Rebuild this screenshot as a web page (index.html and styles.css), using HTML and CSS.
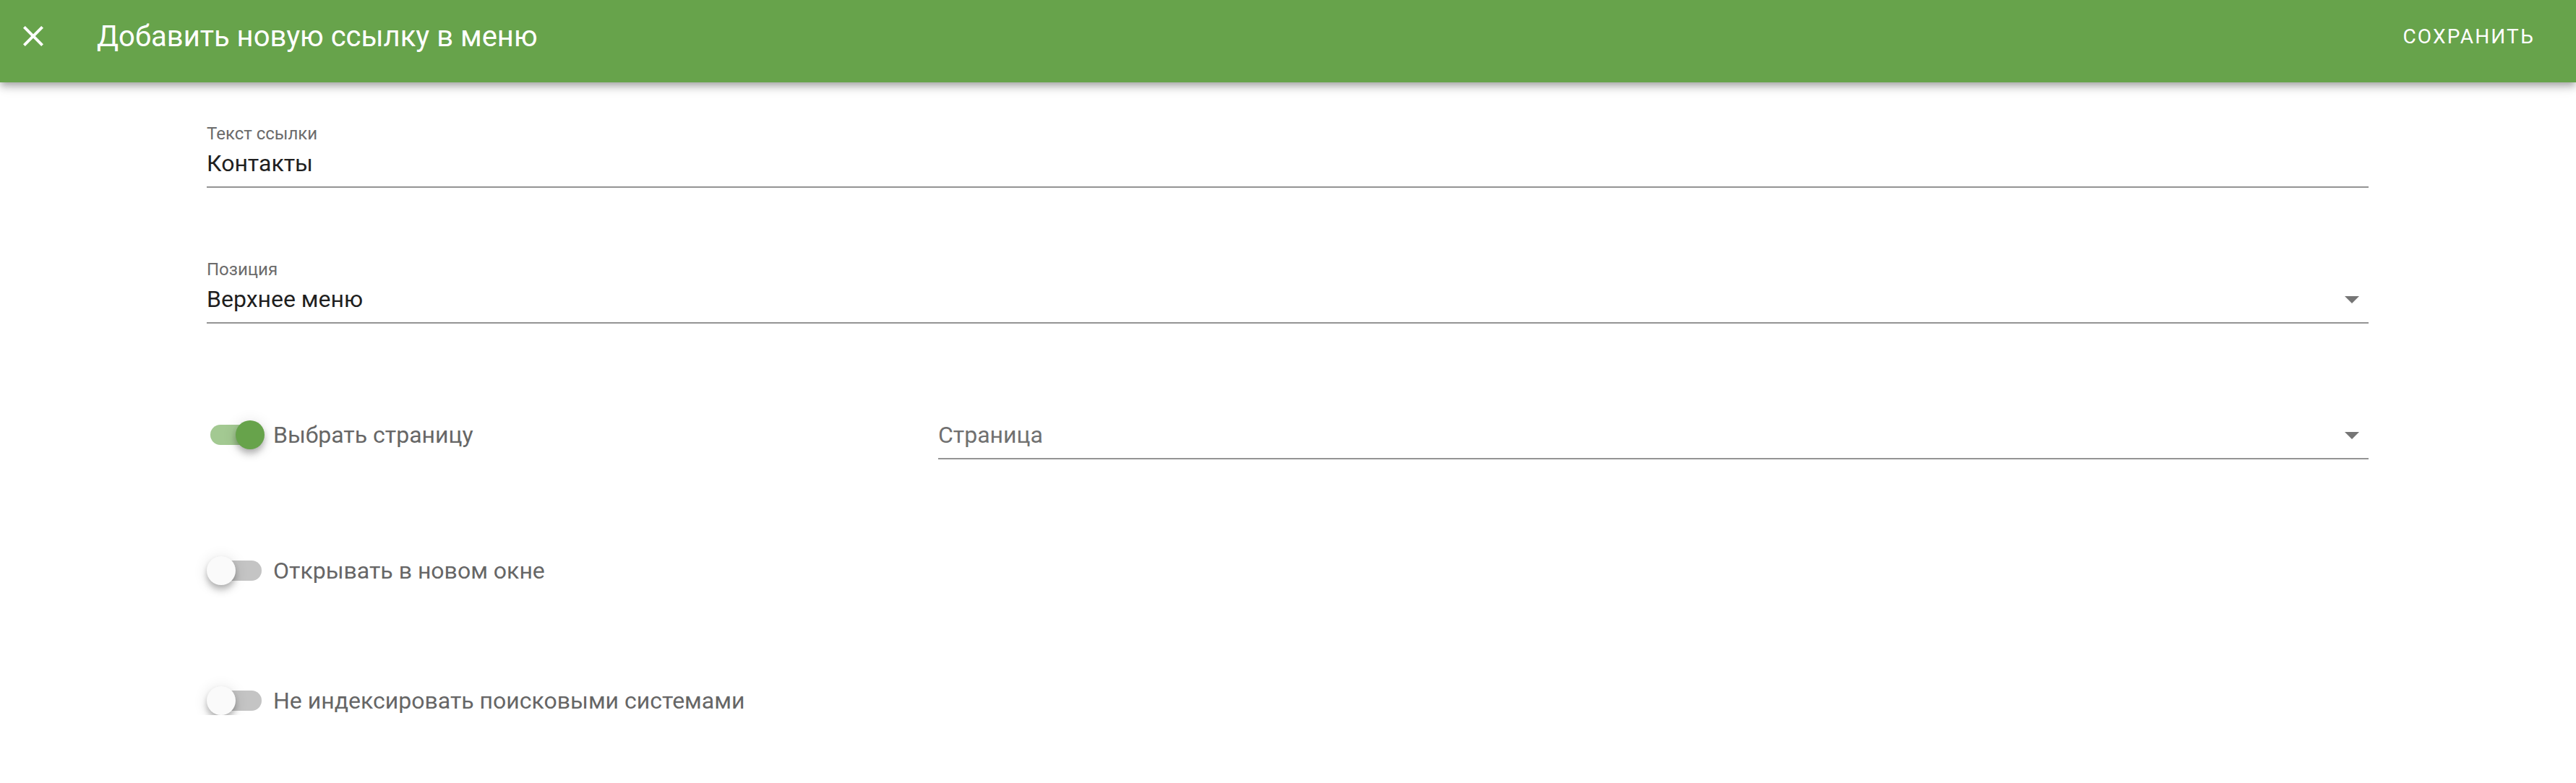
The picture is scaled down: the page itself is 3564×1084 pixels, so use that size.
FILE: index.html
```html
<!DOCTYPE html>
<html lang="ru">
<head>
<meta charset="utf-8">
<title>Добавить новую ссылку в меню</title>
<link rel="stylesheet" href="styles.css">
</head>
<body>
<header class="toolbar">
  <button class="icon-btn" aria-label="Закрыть">
    <svg viewBox="0 0 24 24" width="48" height="48"><path fill="#fff" d="M19 6.41L17.59 5 12 10.59 6.41 5 5 6.41 10.59 12 5 17.59 6.41 19 12 13.41 17.59 19 19 17.59 13.41 12z"/></svg>
  </button>
  <div class="toolbar-title">Добавить новую ссылку в меню</div>
  <div class="spacer"></div>
  <button class="text-btn">Сохранить</button>
</header>
<main class="content">
  <div class="field">
    <div class="field-label">Текст ссылки</div>
    <div class="field-value">Контакты</div>
  </div>
  <div class="field field-gap">
    <div class="field-label">Позиция</div>
    <div class="field-value select">
      <span>Верхнее меню</span>
      <svg class="arrow" viewBox="0 0 24 24" width="48" height="48"><path fill="#757575" d="M7 10l5 5 5-5z"/></svg>
    </div>
  </div>
  <div class="row row-page">
    <div class="switch on">
      <span class="track"></span><span class="thumb"></span>
      <span class="switch-label">Выбрать страницу</span>
    </div>
    <div class="field select-field">
      <div class="field-value select placeholder">
        <span>Страница</span>
        <svg class="arrow" viewBox="0 0 24 24" width="48" height="48"><path fill="#757575" d="M7 10l5 5 5-5z"/></svg>
      </div>
    </div>
  </div>
  <div class="switch switch-row-a">
    <span class="track"></span><span class="thumb"></span>
    <span class="switch-label">Открывать в новом окне</span>
  </div>
  <div class="switch switch-row-b">
    <span class="track"></span><span class="thumb"></span>
    <span class="switch-label">Не индексировать поисковыми системами</span>
  </div>
</main>
</body>
</html>
```
FILE: styles.css
```css
html, body {
  margin: 0;
  padding: 0;
  background: #fff;
  font-family: Roboto, "Noto Sans", "Liberation Sans", sans-serif;
}

.toolbar {
  height: 114px;
  box-sizing: border-box;
  background: #67a34b;
  display: flex;
  align-items: center;
  padding: 0 33px 14px 22px;
  box-shadow: 0 4px 8px -2px rgba(0,0,0,.2), 0 8px 10px 0 rgba(0,0,0,.14), 0 2px 20px 0 rgba(0,0,0,.12);
  position: relative;
  z-index: 1;
}

.icon-btn {
  width: 48px;
  height: 48px;
  padding: 0;
  border: 0;
  background: transparent;
  display: flex;
}

.toolbar-title {
  margin-left: 64px;
  color: #fff;
  font-size: 40px;
  font-weight: 400;
  white-space: nowrap;
}

.spacer { flex: 1; }

.text-btn {
  border: 0;
  background: transparent;
  color: #fff;
  font-family: inherit;
  font-size: 28px;
  font-weight: 400;
  text-transform: uppercase;
  letter-spacing: 2.2px;
  padding: 0 24px;
}

.content {
  padding: 0 287px 0 286px;
}

.field {
  border-bottom: 2px solid #949494;
  padding-bottom: 12px;
}

.field:first-child { margin-top: 59px; }

.field-gap { margin-top: 101px; }

.field-label {
  font-size: 24px;
  line-height: 24px;
  color: #6b6b6b;
  margin-bottom: 9px;
}

.field-value {
  font-size: 32px;
  line-height: 40px;
  height: 40px;
  color: #1f1f1f;
}

.select {
  display: flex;
  align-items: center;
  justify-content: space-between;
}

.select .arrow {
  flex: none;
  margin-right: -1px;
}

.placeholder { color: #707070; }

.row {
  display: grid;
  grid-template-columns: 1fr 2fr;
  align-items: start;
}

.row-page { margin-top: 134px; }

.select-field { margin-left: 15px; }

.switch {
  position: relative;
  display: flex;
  align-items: center;
  height: 40px;
  padding-left: 92px;
}

.switch-row-a { margin-top: 134px; }
.switch-row-b { margin-top: 140px; }

.track {
  position: absolute;
  left: 5px;
  top: 6px;
  width: 71px;
  height: 28px;
  border-radius: 14px;
  background: #c4c4c4;
}

.thumb {
  position: absolute;
  left: 0;
  top: 0;
  width: 40px;
  height: 40px;
  border-radius: 50%;
  background: #fafafa;
  box-shadow: 0 4px 8px -2px rgba(0,0,0,.2), 0 8px 10px 0 rgba(0,0,0,.14), 0 2px 20px 0 rgba(0,0,0,.12);
}

.switch.on .track { background: #a3c992; }
.switch.on .thumb { left: 40px; background: #67a34b; }

.switch-label {
  font-size: 32px;
  line-height: 40px;
  color: #666;
  white-space: nowrap;
}
```
